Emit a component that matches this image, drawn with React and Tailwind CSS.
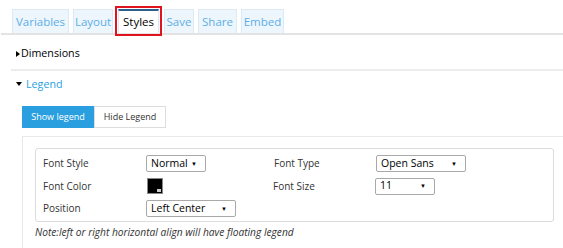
import React from "react";

function Caret({ down }) {
  return down ? (
    <span className="inline-block w-0 h-0 border-l-[3px] border-r-[3px] border-t-[4px] border-l-transparent border-r-transparent border-t-black mr-[4px]"></span>
  ) : (
    <span className="inline-block w-0 h-0 border-t-[3px] border-b-[3px] border-l-[4px] border-t-transparent border-b-transparent border-l-black mr-[1px]"></span>
  );
}

function Select({ value, width }) {
  return (
    <div
      className={`flex items-center justify-between h-[17px] border border-[#a9a9a9] rounded-[2px] bg-white pl-[4px] pr-[8px] text-[10.5px] text-black ${width}`}
    >
      <span>{value}</span>
      <span className="text-[6px] leading-none">▼</span>
    </div>
  );
}

function App() {
  const tabs = [
    { name: "Variables", w: "w-[57px]" },
    { name: "Layout", w: "w-[40px]" },
    { name: "Styles", w: "w-[41px]" },
    { name: "Save", w: "w-[30px]" },
    { name: "Share", w: "w-[39px]" },
    { name: "Embed", w: "w-[43px]" },
  ];

  return (
    <div className="w-[563px] h-[248px] bg-white overflow-hidden font-['Open_Sans',sans-serif]">
      {/* tabs */}
      <div className="flex items-end pl-[11px] pt-[9px] ml-[1px] border-b-2 border-[#e3e3e3] h-[35px]">
        {tabs.map((t) =>
          t.name === "Styles" ? (
            <div key={t.name} className="ml-[-2px] mr-[2px] mb-[-3px] border-2 border-[#e0141e] p-px">
              <div className={`h-[24px] ${t.w} flex items-center justify-center text-[11.5px] text-black bg-white border-t-2 border-[#2c5f8c] border-x border-x-[#dde8f2]`}>
                {t.name}
              </div>
            </div>
          ) : (
            <div
              key={t.name}
              className={`h-[24px] ${t.w} mr-[4px] flex items-center justify-center text-[11.5px] text-[#5aaee6] bg-[#eef6fd] border border-b-0 border-[#dde9f5]`}
            >
              {t.name}
            </div>
          )
        )}
      </div>

      {/* sections */}
      <div className="pl-[11px]">
        <div className="h-[36px] flex items-center pl-[5px] pt-[3px] border-b-2 border-[#ececec] text-[10.7px] text-black">
          <Caret />
          Dimensions
        </div>
        <div className="h-[26px] flex items-center pl-[5px] text-[10.7px] text-[#2a9fe0]">
          <Caret down />
          Legend
        </div>
      </div>

      <div className="pl-[22px] mt-[9px] flex text-[9px]">
        <div className="h-[22px] w-[72px] flex items-center justify-center bg-[#2a9fe0] text-white border border-[#2a9fe0]">
          Show legend
        </div>
        <div className="h-[22px] w-[72px] flex items-center justify-center bg-white text-[#333] border border-[#ddd]">
          Hide Legend
        </div>
      </div>

      <div className="ml-[22px] mt-[8px] border-t border-l border-[#e8e8e8] pl-[12px] pr-[9px] pt-[11px] h-[120px]">
        <div className="border border-[#dcdcdc] rounded-[3px] h-[74px] pl-[7px] pt-[3px] text-[10px] text-[#333]">
          <div className="flex items-center h-[23px]">
            <span className="w-[103px]">Font Style</span>
            <Select value="Normal" width="w-[60px]" />
            <span className="ml-[68px] w-[102px]">Font Type</span>
            <Select value="Open Sans" width="w-[90px]" />
          </div>
          <div className="flex items-center h-[22px]">
            <span className="w-[104px]">Font Color</span>
            <div className="w-[16px] h-[16px] bg-black border border-[#888] relative">
              <span className="absolute right-[1px] bottom-[1px] w-[4px] h-[3px] bg-[#ccc]"></span>
            </div>
            <span className="ml-[110px] w-[102px]">Font Size</span>
            <Select value="11" width="w-[60px]" />
          </div>
          <div className="flex items-center h-[23px]">
            <span className="w-[103px]">Position</span>
            <Select value="Left Center" width="w-[90px]" />
          </div>
        </div>
        <div className="mt-[3px] text-[10.2px] italic text-[#333]">
          Note:left or right horizontal align will have floating legend
        </div>
      </div>
    </div>
  );
}

export default App;
